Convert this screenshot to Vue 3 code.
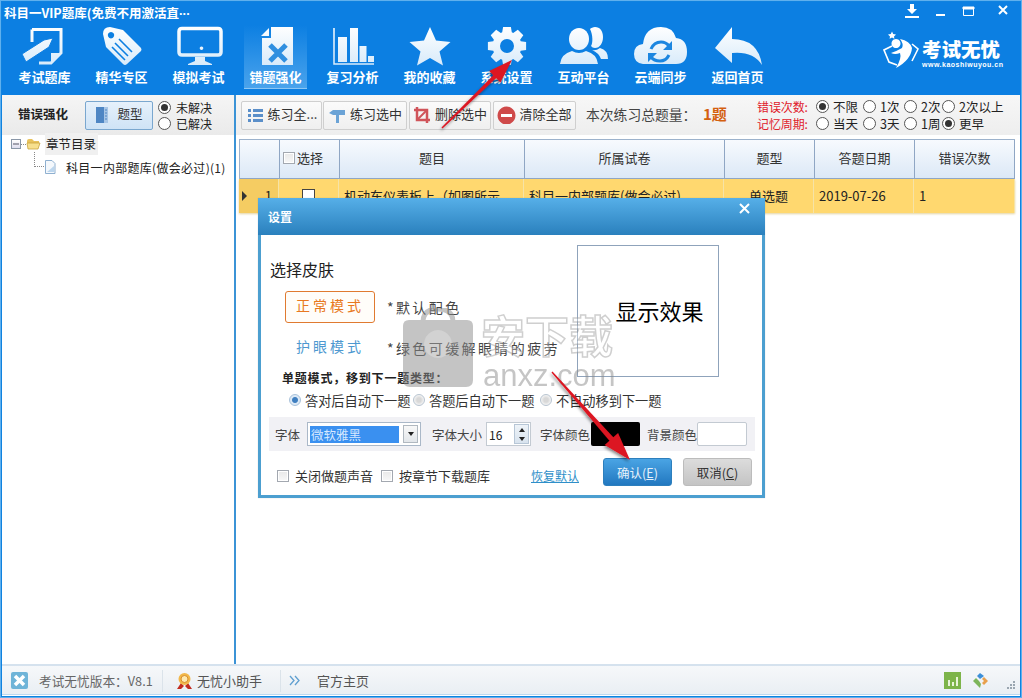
<script setup>
function gearPath() {
  const cx = 25, cy = 20, n = 8, ro = 19.5, ri = 14.5
  let d = ''
  for (let i = 0; i < n; i++) {
    const a = (i * 2 * Math.PI) / n - Math.PI / 2
    const w = 0.24, w2 = 0.2
    const pts = [
      [ri, a - w - 0.1],
      [ro, a - w2],
      [ro, a + w2],
      [ri, a + w + 0.1]
    ]
    pts.forEach((p, j) => {
      const x = (cx + p[0] * Math.cos(p[1])).toFixed(1)
      const y = (cy + p[0] * Math.sin(p[1])).toFixed(1)
      d += (i === 0 && j === 0 ? 'M' : 'L') + x + ' ' + y + ' '
    })
  }
  return d + 'Z M32 20 A7 7 0 1 0 18 20 A7 7 0 1 0 32 20 Z'
}

const W = 'url(#navfill)'
const B = '#0c7fe2'
const navItems = [
  { label: '考试题库', shapes: [
    { d: 'M12 3.5H41V27L31 37H19', fill: 'none', stroke: W, sw: 3 },
    { d: 'M12 3.5V16', fill: 'none', stroke: W, sw: 3 },
    { d: 'M41 27H31V37Z', fill: W },
    { d: 'M2 28L6 36L29 21L33 12L24 14Z', fill: W, stroke: B, sw: 1 }
  ] },
  { label: '精华专区', shapes: [
    { d: 'M6 8Q6 1 13 1L26 4L44 22Q45 24 44 25L30 38Q28 40 26 38L9 21Z', fill: W },
    { d: 'M14 6a3.2 3.2 0 1 0 .01 0Z', fill: B },
    { d: 'M22 13L35 26M18 17L31 30M15 21L28 34', fill: 'none', stroke: B, sw: 1.6 }
  ] },
  { label: '模拟考试', shapes: [
    { d: 'M8 2.5H44Q47 2.5 47 5.5V26Q47 29 44 29H8Q5 29 5 26V5.500Q5 2.500 8 2.500Z', fill: 'none', stroke: W, sw: 3.5 },
    { d: 'M27.500 24a1.800 1.800 0 1 0-.01 0Z', fill: W },
    { d: 'M21 31H31V35L38 38V39H14V38L21 35Z', fill: W }
  ] },
  { label: '错题强化', active: true, shapes: [
    { d: 'M20 1H42V39H11V12H20Z', fill: W },
    { d: 'M18 2V10H10Z', fill: W },
    { d: 'M19 19L35 35M35 19L19 35', fill: 'none', stroke: '#2f8fe0', sw: 5 }
  ] },
  { label: '复习分析', shapes: [
    { d: 'M6 2V38H46', fill: 'none', stroke: W, sw: 1.5 },
    { d: 'M10 11H19V36H10ZM22 2H30V36H22ZM31.500 20H38.500V36H31.500ZM40 30H46V36H40Z', fill: W }
  ] },
  { label: '我的收藏', shapes: [
    { d: 'M25 1L31 14.500L45.500 16L34.500 25.500L38 39.500L25 32L12 39.500L15.500 25.500L4.500 16L19 14.500Z', fill: W }
  ] },
  { label: '系统设置', shapes: [{ d: gearPath(), fill: W, rule: 'evenodd' }] },
  { label: '互动平台', shapes: [
    { d: 'M20 2C26 2 30 7 30 13S26 24 20 24S10 19 10 13S14 2 20 2Z', fill: W },
    { d: 'M1 38Q2 28 13 25Q20 29 27 25Q38 28 39 38Z', fill: W },
    { d: 'M36 1C41 1 44 5 44 11S41 22 36 22C34 22 33 21 32 20C34 17 34 9 31 3C32 2 34 1 36 1Z', fill: W },
    { d: 'M33 24Q37 25 41 22Q49 24 49 33H42Q40 27 33 24Z', fill: W }
  ] },
  { label: '云端同步', shapes: [
    { d: 'M7 38Q-2 37 -2 28Q-2 19 7 18Q9 1 25 1Q37 1 40 12Q51 13 51 26Q51 38 40 38Z', fill: W },
    { d: 'M15 23Q18 16 25 16Q30 16 33 20M33 29Q30 35 24 35Q18 35 15 31', fill: 'none', stroke: '#1c86e0', sw: 3 },
    { d: 'M36 15V24H27ZM12 36V27H21Z', fill: '#1c86e0' }
  ] },
  { label: '返回首页', shapes: [
    { d: 'M2 22L19 1V13Q45 13 49 39Q40 25 19 27V37Z', fill: W }
  ] }
]

const tools = [
  { label: '练习全...', w: 81, ml: 0, shapes: [
    { d: 'M2 3H5V6H2ZM2 8H5V11H2ZM2 13H5V16H2ZM7 3H17V6H7ZM7 8H17V11H7ZM7 13H17V16H7Z', fill: '#5b8fc9' }
  ] },
  { label: '练习选中', w: 84, ml: 1, shapes: [
    { d: 'M1 7L5 4H17V9H11V17H8V9H5Z', fill: '#6ba3d6' }
  ] },
  { label: '删除选中', w: 82, ml: 2, shapes: [
    { d: 'M4 1V14H17M1 4H14V17', fill: 'none', stroke: '#d0545a', sw: 2.5 },
    { d: 'M4 14L14 4', fill: 'none', stroke: '#d0545a', sw: 2 }
  ] },
  { label: '清除全部', w: 83, ml: 2, shapes: [
    { d: 'M9.500 .5a9 9 0 1 0 .01 0Z', fill: '#cf4a4a' },
    { d: 'M4 8H15V11H4Z', fill: '#fff' }
  ] }
]

const columns = [
  { label: '', w: 40 },
  { label: '选择', w: 60, check: true },
  { label: '题目', w: 185 },
  { label: '所属试卷', w: 200 },
  { label: '题型', w: 90 },
  { label: '答题日期', w: 100 },
  { label: '错误次数', w: 100 }
]

const errOptions = [
  { t: '不限', on: true, w: 47 }, { t: '1次', w: 41 }, { t: '2次', w: 38 }, { t: '2次以上' }
]
const memOptions = [
  { t: '当天', w: 47 }, { t: '3天', w: 41 }, { t: '1周', w: 38 }, { t: '更早', on: true }
]
</script>

<template>
  <div class="win">
    <svg class="defs" width="0" height="0" aria-hidden="true">
      <defs>
        <linearGradient id="navfill" gradientUnits="userSpaceOnUse" x1="0" y1="0" x2="0" y2="40">
          <stop offset="0" stop-color="#ffffff" />
          <stop offset="1" stop-color="#d7eafa" />
        </linearGradient>
      </defs>
    </svg>

    <header class="head">
      <div class="titlerow">
        <span class="title">科目一VIP题库(免费不用激活直<span class="more-dots">···</span></span>
        <div class="winbtns">
          <svg class="wb wb-dl" width="16" height="14" viewBox="0 0 16 14"><path d="M6 0H10V5H13L8 10L3 5H6ZM1 12H15V14H1Z" fill="#fff" /></svg>
          <svg class="wb wb-min" width="12" height="14" viewBox="0 0 12 14"><path d="M1 10H10V12H1Z" fill="#fff" /></svg>
          <svg class="wb wb-max" width="13" height="14" viewBox="0 0 13 14"><path d="M1.500 4.500H11.500V11.500H1.500Z M1 3H12V5H1Z" fill="none" stroke="#fff" /><path d="M1 3H12V5H1Z" fill="#fff" /></svg>
          <svg class="wb wb-x" width="12" height="14" viewBox="0 0 12 14"><path d="M2 2L10 10M10 2L2 10" stroke="#fff" stroke-width="2" fill="none" /></svg>
        </div>
      </div>
      <div class="navrow">
        <nav class="nav">
          <div v-for="n in navItems" :key="n.label" class="navitem" :class="{ active: n.active }">
            <svg class="navicon" width="50" height="40" viewBox="0 0 50 40">
              <path v-for="(s, i) in n.shapes" :key="i" :d="s.d" :fill="s.fill" :stroke="s.stroke" :stroke-width="s.sw" :fill-rule="s.rule" />
            </svg>
            <span class="navlabel">{{ n.label }}</span>
          </div>
        </nav>
        <div class="logo">
          <svg width="36" height="40" viewBox="0 0 36 40">
            <path d="M5 2L6.500 5L10 5.500L7.500 8L8 11L5 9.500L2 11L2.500 8L0 5.500L3.500 5Z" fill="#fff" transform="translate(5 0) scale(.8)" />
            <path d="M13 9a4.500 4.500 0 1 1-.01 0Z" fill="#fff" />
            <path d="M17 9Q27 11 29 18Q28 30 13 38Q19 28 17 23Q12 25 8 23Q14 21 19 18Q21 14 17 9Z" fill="#fff" />
            <path d="M9 16L1 20L6 32L14 35M29 14L35 19L29 31" fill="none" stroke="#fff" stroke-width="1.600" />
          </svg>
          <div class="logotext">
            <span class="logo-cn">考试无忧</span>
            <span class="logo-en">www.kaoshiwuyou.cn</span>
          </div>
        </div>
      </div>
    </header>

    <main class="body">
      <aside class="side">
        <div class="sidebar-top">
          <span class="side-title">错误强化</span>
          <button class="typebtn">
            <svg width="14" height="18" viewBox="0 0 14 18"><path d="M1 1H13V17H1Z" fill="#4e86c4" /><path d="M9 1H13V17H9Z" fill="#a8c6e6" /><path d="M10 4H12M10 7H12M10 10H12M10 13H12" stroke="#4e86c4" /></svg>
            <span class="lift">题型</span>
          </button>
          <div class="siderad">
            <label class="rad"><i class="dot on"></i>未解决</label>
            <label class="rad"><i class="dot"></i>已解决</label>
          </div>
        </div>
        <div class="tree">
          <div class="tree-root">
            <span class="minus"></span>
            <span class="tree-dash"></span>
            <svg width="15" height="12" viewBox="0 0 15 12"><path d="M1 3Q1 1 3 1H6L8 3H13V5H1Z" fill="#e8c25c" /><path d="M1 5H14L12 11H2Z" fill="#f7df8d" stroke="#c9a43f" stroke-width=".8" /></svg>
            <span class="tree-label">章节目录</span>
          </div>
          <div class="tree-leaf">
            <span class="elbow"></span>
            <svg width="12" height="14" viewBox="0 0 12 14"><path d="M1.500 .5H8L11 3.500V13.500H1.500Z" fill="#f4f8fc" stroke="#8fb0d0" /><path d="M3 12H10V6Z" fill="#bcd6ee" /></svg>
            <span class="leaf-label">科目一内部题库(做会必过)(1)</span>
          </div>
        </div>
      </aside>

      <section class="main">
        <div class="toolbar">
          <button v-for="t in tools" :key="t.label" class="tool" :style="{ width: t.w + 'px', marginLeft: t.ml + 'px' }">
            <svg width="19" height="18" viewBox="0 0 19 18">
              <path v-for="(s, i) in t.shapes" :key="i" :d="s.d" :fill="s.fill" :stroke="s.stroke" :stroke-width="s.sw" />
            </svg>
            <span class="lift">{{ t.label }}</span>
          </button>
          <span class="total">本次练习总题量：</span>
          <span class="total-n">1题</span>
          <div class="filters">
            <div class="filter">
              <span class="f-label">错误次数:</span>
              <label v-for="o in errOptions" :key="o.t" class="f-opt" :style="{ width: o.w ? o.w + 'px' : 'auto' }"><i class="dot" :class="{ on: o.on }"></i>{{ o.t }}</label>
            </div>
            <div class="filter">
              <span class="f-label">记忆周期:</span>
              <label v-for="o in memOptions" :key="o.t" class="f-opt" :style="{ width: o.w ? o.w + 'px' : 'auto' }"><i class="dot" :class="{ on: o.on }"></i>{{ o.t }}</label>
            </div>
          </div>
        </div>

        <div class="table">
          <div class="thead">
            <div v-for="c in columns" :key="c.w + c.label" class="th" :class="{ 'th-check': c.check }" :style="{ width: c.w + 'px' }">
              <i v-if="c.check" class="chk"></i>{{ c.label }}
            </div>
          </div>
          <div class="tr">
            <div class="td idx" style="width:40px"><span class="caret"></span><span>1</span></div>
            <div class="td ctr" style="width:60px"><i class="rowchk"></i></div>
            <div class="td" style="width:185px">机动车仪表板上（如图所示</div>
            <div class="td" style="width:200px">科目一内部题库(做会必过)</div>
            <div class="td ctr" style="width:90px">单选题</div>
            <div class="td" style="width:100px">2019-07-26</div>
            <div class="td" style="width:101px">1</div>
          </div>
        </div>
      </section>
    </main>

    <footer class="status">
      <svg class="st-logo" width="17" height="17" viewBox="0 0 17 17"><rect width="17" height="17" rx="2" fill="#6fb4d8" /><path d="M4 4L13 13M13 4L4 13" stroke="#fff" stroke-width="3.500" /></svg>
      <span class="st-ver">考试无忧版本：V8.1</span>
      <span class="st-sep st-sep1"></span>
      <svg class="st-medal" width="17" height="18" viewBox="0 0 17 18"><path d="M1 17L5 11L8 14L5 17ZM16 17L12 11L9 14L12 17Z" fill="#c22c20" /><circle cx="8.500" cy="7" r="6" fill="#f2b84a" /><circle cx="8.500" cy="7" r="3.500" fill="#fde9b0" stroke="#d98e2a" /></svg>
      <span class="st-help">无忧小助手</span>
      <span class="st-sep st-sep2"></span>
      <svg class="st-more" width="11" height="11" viewBox="0 0 11 11"><path d="M1 1L5 5.500L1 10M6 1L10 5.500L6 10" fill="none" stroke="#5f9fd0" stroke-width="1.300" /></svg>
      <span class="st-home">官方主页</span>
      <div class="st-right">
        <svg width="17" height="17" viewBox="0 0 17 17"><rect width="17" height="17" fill="#7db44a" /><path d="M4 8H6V14H4ZM8 10H10V14H8ZM12 5H14V14H12Z" fill="#e8f3d8" /></svg>
        <svg class="st-dia" width="17" height="17" viewBox="0 0 17 17"><path d="M8 1L12 4L8 7L5 4Z" fill="#3c8fd8" /><path d="M12 5L16 9L12 13L10 11L12 9L10 7Z" fill="#e8a04c" /><path d="M4 6L7 9L9 12L8 16L1 9Z" fill="#7cb55a" /></svg>
        <svg class="st-grip" width="9" height="9" viewBox="0 0 9 9"><path d="M7 1H9V3H7ZM4 4H6V6H4ZM7 4H9V6H7ZM1 7H3V9H1ZM4 7H6V9H4ZM7 7H9V9H7Z" fill="#9aa6b0" /></svg>
      </div>
    </footer>

    <div class="dialog">
      <div class="dlg-title">
        <span>设置</span>
        <svg width="11" height="11" viewBox="0 0 11 11"><path d="M1 1L10 10M10 1L1 10" stroke="#fff" stroke-width="2" /></svg>
      </div>
      <div class="dlg-body">
        <div class="dlg-top">
          <div class="dlg-left">
            <div class="skin-title">选择皮肤</div>
            <div class="mode-row first">
              <span class="mode mode-on">正常模式</span>
              <span class="mode-note">*默认配色</span>
            </div>
            <div class="mode-row second">
              <span class="mode mode-off">护眼模式</span>
              <span class="mode-note">*绿色可缓解眼睛的疲劳</span>
            </div>
            <div class="single">单题模式，移到下一题类型：</div>
          </div>
          <div class="preview">显示效果</div>
        </div>
        <div class="auto-row">
          <label class="arad a1"><i class="bdot on"></i>答对后自动下一题</label>
          <label class="arad a2"><i class="bdot"></i>答题后自动下一题</label>
          <label class="arad a3"><i class="bdot"></i>不自动移到下一题</label>
        </div>
        <div class="font-row">
          <span class="fl1">字体</span>
          <div class="select"><span class="sel-text">微软雅黑</span><span class="sel-btn"><i></i></span></div>
          <span class="fl2">字体大小</span>
          <div class="spin"><span>16</span><span class="spin-btns"><i class="up"></i><i class="down"></i></span></div>
          <span class="fl3">字体颜色</span>
          <span class="swatch black"></span>
          <span class="fl4">背景颜色</span>
          <span class="swatch white"></span>
        </div>
        <div class="dlg-foot">
          <label class="fchk c1"><i class="chk"></i>关闭做题声音</label>
          <label class="fchk c2"><i class="chk"></i>按章节下载题库</label>
          <a class="restore">恢复默认</a>
          <button class="btn ok">确认(<u>E</u>)</button>
          <button class="btn cancel">取消(<u>C</u>)</button>
        </div>
      </div>
    </div>

    <div class="watermark" aria-hidden="true">
      <svg class="wm-bag" width="70" height="80" viewBox="0 0 70 80">
        <path d="M20 14Q20 1 35 1Q50 1 50 14" fill="none" stroke="#8a8a8a" stroke-width="5" />
        <path d="M6 12H64Q70 12 70 18V72Q70 79 63 79H7Q0 79 0 72V18Q0 12 6 12Z" fill="#8a8a8a" />
        <path d="M35 22a14 14 0 1 1-.01 0Z" fill="#a6a6a6" />
      </svg>
      <span class="wm-cn">安下载</span>
      <span class="wm-en">anxz.com</span>
    </div>

    <svg class="arrows" width="1022" height="698" viewBox="0 0 1022 698" aria-hidden="true">
      <defs>
        <filter id="ashadow" x="-20%" y="-20%" width="140%" height="140%">
          <feDropShadow dx="-1" dy="2" stdDeviation="1.500" flood-color="#000" flood-opacity=".45" />
        </filter>
      </defs>
      <polygon filter="url(#ashadow)" fill="#dc1420" points="442.500,128.500 441.500,127.500 493.400,75.300 489.200,71 512,60 500.400,82.400 496.200,78.100" />
      <polygon filter="url(#ashadow)" fill="#dc1420" points="552.500,371.500 551.500,372.500 609.500,440.700 604.700,445 630,460 618.100,433 613.300,437.300" />
    </svg>
  </div>
</template>

<style scoped>
* { box-sizing: border-box; }
i { font-style: normal; }
button { font-family: inherit; padding: 0; }
.defs { position: absolute; }

.win {
  position: relative;
  width: 1022px;
  height: 698px;
  overflow: hidden;
  display: flex;
  flex-direction: column;
  background: #fff;
  border: 2px solid #1082df;
  outline: 1px solid #5fb0ee;
  outline-offset: -1px;
  font-family: "Noto Sans CJK SC", "Liberation Sans", sans-serif;
  font-size: 12px;
  color: #222;
}
.lift { margin-bottom: 3px; }

/* header */
.head { height: 93px; background: #0c7fe2; flex: none; color: #fff; }
.titlerow { height: 23px; display: flex; align-items: center; justify-content: space-between; padding-left: 2px; }
.title { font-size: 12.500px; font-weight: 700; line-height: 22px; }
.more-dots { font-family: "Liberation Sans", sans-serif; letter-spacing: -.5px; }
.winbtns { display: flex; align-items: center; height: 20px; margin-top: -6px; }
.wb { display: block; flex: none; }
.wb-dl { margin-right: 15px; }
.wb-min { margin-right: 15px; }
.wb-max { margin-right: 22px; }
.wb-x { margin-right: 11px; }
.navrow { display: flex; height: 70px; }
.nav { display: flex; padding-left: 4px; }
.navitem {
  width: 77px;
  display: flex;
  flex-direction: column;
  align-items: center;
  position: relative;
}
.navicon { display: block; margin-top: 1px; overflow: visible; flex: none; }
.navlabel { font-size: 13px; font-weight: 700; line-height: 18px; margin-top: 2px; white-space: nowrap; }
.navitem.active::before {
  content: "";
  position: absolute;
  left: 7px;
  right: 7px;
  top: 0;
  height: 63px;
  background: linear-gradient(#0c7fe2, #4aa3ec);
  border-bottom: 1px solid #8cc6f4;
}
.navitem.active > * { position: relative; }
.logo { margin-left: auto; margin-right: 17px; display: flex; align-items: flex-start; padding-top: 5px; }
.logotext { display: flex; flex-direction: column; margin-left: 3px; padding-top: 7px; width: 81px; }
.logo-cn { font-size: 19.500px; font-weight: 900; line-height: 24px; white-space: nowrap; }
.logo-en { font-family: "Liberation Sans", sans-serif; font-size: 7px; font-weight: 700; line-height: 8px; letter-spacing: .5px; white-space: nowrap; }

/* body */
.body { flex: 1; display: flex; min-height: 0; }
.side { width: 234px; flex: none; border-right: 2px solid #3b93d6; }
.sidebar-top {
  height: 40px;
  display: flex;
  align-items: center;
  background: linear-gradient(#f5f5f5, #eaeaea);
  padding-left: 16px;
}
.side-title { font-size: 12.500px; font-weight: 700; width: 67px; margin-bottom: 3px; }
.typebtn {
  width: 68px;
  height: 29px;
  display: flex;
  align-items: center;
  justify-content: center;
  gap: 8px;
  background: linear-gradient(#e6f1fb, #cfe3f6);
  border: 1px solid #7aa7cf;
  border-radius: 2px;
  font-size: 12.500px;
  color: #333;
}
.siderad { display: flex; flex-direction: column; margin-left: 5px; }
.rad { display: flex; align-items: center; height: 16px; font-size: 12px; white-space: nowrap; }
.dot {
  width: 13px;
  height: 13px;
  border-radius: 50%;
  border: 1px solid #555;
  background: #fff;
  flex: none;
  margin-right: 5px;
  position: relative;
}
.dot.on::after {
  content: "";
  position: absolute;
  inset: 2px;
  border-radius: 50%;
  background: #333;
}

.tree { padding-top: 0; }
.tree-root { display: flex; align-items: center; height: 22px; padding-left: 9px; margin-top: -2px; }
.minus { width: 10px; height: 10px; border: 1px solid #8a97a8; background: linear-gradient(#fff, #dde); position: relative; flex: none; }
.minus::after { content: ""; position: absolute; left: 1px; right: 1px; top: 3px; height: 2px; background: #556; transform: scaleY(.5); }
.tree-dash { width: 5px; border-top: 1px dotted #888; flex: none; }
.tree-label { background: #f0f0f0; height: 22px; line-height: 22px; padding: 0 2px 0 1px; margin-left: 4px; font-size: 12.500px; }
.tree-leaf { display: flex; align-items: center; height: 22px; padding-left: 32px; margin-top: 1px; }
.elbow { width: 10px; height: 15px; border-left: 1px dotted #888; border-bottom: 1px dotted #888; margin-top: -15px; flex: none; }
.leaf-label { margin-left: 10px; font-size: 12px; white-space: nowrap; letter-spacing: .3px; }

.main { flex: 1; min-width: 0; }
.toolbar {
  height: 40px;
  display: flex;
  align-items: center;
  padding-left: 5px;
  background: linear-gradient(#f7f7f7, #eeeeee);
  position: relative;
}
.tool {
  height: 29px;
  display: flex;
  align-items: center;
  justify-content: center;
  gap: 3px;
  background: linear-gradient(#fbfbfb, #efefef);
  border: 1px solid #cfcfcf;
  border-radius: 2px;
  font-size: 13px;
  color: #333;
  white-space: nowrap;
  flex: none;
}
.total { margin: 0 0 3px 10px; font-size: 13.800px; color: #444; white-space: nowrap; width: 117px; }
.total-n { color: #d4600f; font-size: 15px; font-weight: 700; white-space: nowrap; margin-bottom: 3px; }
.filters { position: absolute; left: 521px; top: 3px; }
.filter { display: flex; align-items: center; height: 17px; white-space: nowrap; }
.f-label { color: #e0202c; font-size: 12px; width: 59px; letter-spacing: -.1px; }
.f-opt { display: flex; align-items: center; font-size: 12.500px; }
.f-opt .dot { margin-right: 4px; }

.table { margin: 4px 0 0 3px; width: 776px; }
.thead { display: flex; height: 40px; border-top: 1px solid #9cb2cc; border-left: 1px solid #9cb2cc; background: linear-gradient(#f7fafe, #dbe8f6); }
.th {
  display: flex;
  align-items: center;
  justify-content: center;
  border-right: 1px solid #8fa6c4;
  border-bottom: 1px solid #8fa6c4;
  font-size: 13px;
  color: #333;
  flex: none;
  padding-bottom: 3px;
}
.th-check { justify-content: flex-start; padding-left: 3px; }
.th:first-child { width: 40px; }
.chk {
  width: 12px;
  height: 12px;
  border: 1px solid #a3a8b0;
  background: linear-gradient(#e8e8e8, #f8f8f8);
  box-shadow: inset 0 0 0 1px #fff;
  flex: none;
  margin-right: 2px;
}
.tr { display: flex; height: 34px; background: #ffd86f; box-shadow: 0 1px 2px #e3d3a0; overflow: hidden; }
.td {
  flex: none;
  display: flex;
  align-items: center;
  padding-left: 5px;
  padding-bottom: 2px;
  font-size: 13px;
  color: #222;
  white-space: nowrap;
  overflow: hidden;
  border-right: 1px solid #f6e3a6;
}
.td.ctr { justify-content: center; padding-left: 0; }
.idx { justify-content: flex-end; padding-right: 6px; background: #f5cc62; position: relative; }
.caret { position: absolute; left: 3px; top: 12px; border-left: 5px solid #333; border-top: 5px solid transparent; border-bottom: 5px solid transparent; }
.rowchk { width: 13px; height: 13px; border: 1px solid #444; background: #fff; }

/* status */
.status {
  height: 32px;
  margin-top: auto;
  flex: none;
  display: flex;
  align-items: center;
  background: linear-gradient(#f6f8fa, #e9eef3);
  border-top: 2px solid #d5e2ee;
  border-bottom: 1px solid #fff;
  box-shadow: inset 0 -1px 0 #bcd9f0;
  color: #666;
  font-size: 12.700px;
  position: relative;
  padding-left: 9px;
}
.st-logo { flex: none; }
.st-ver { margin-left: 11px; width: 123px; white-space: nowrap; }
.st-sep { width: 1px; height: 22px; background: #dbe3ea; flex: none; }
.st-medal { margin-left: 13px; flex: none; }
.st-help { margin-left: 4px; width: 83px; color: #555; font-size: 13px; }
.st-more { margin-left: 8px; margin-right: 17px; flex: none; }
.st-home { color: #555; font-size: 13px; }
.st-right { margin-left: auto; display: flex; align-items: center; padding-right: 5px; }
.st-dia { margin-left: 11px; }
.st-grip { margin-left: 17px; margin-top: 8px; }

/* dialog */
.dialog {
  position: absolute;
  left: 256px;
  top: 196px;
  width: 507px;
  height: 300px;
  display: flex;
  flex-direction: column;
  background: #fff;
  border: 3px solid #4c9fd0;
  border-top: 0;
  box-shadow: 0 0 1px rgba(0,0,0,.2);
}
.dlg-title {
  height: 37px;
  margin: 0 -3px;
  flex: none;
  background: linear-gradient(#56afe8, #2a80bd);
  color: #fff;
  font-size: 12px;
  font-weight: 700;
  display: flex;
  align-items: center;
  justify-content: space-between;
  padding: 0 15px 0 10px;
}
.dlg-title svg { margin-top: -17px; }
.dlg-body { flex: 1; min-height: 0; display: flex; flex-direction: column; }
.dlg-top { display: flex; height: 157px; }
.dlg-left { width: 316px; padding-left: 9px; flex: none; }
.skin-title { margin-top: 24px; font-size: 16px; line-height: 20px; color: #222; }
.mode-row { display: flex; align-items: center; height: 32px; }
.mode-row.first { margin-top: 12px; }
.mode-row.second { margin-top: 9px; }
.mode {
  width: 90px;
  height: 32px;
  margin-left: 15px;
  display: flex;
  align-items: center;
  justify-content: center;
  font-size: 14px;
  letter-spacing: 3px;
  flex: none;
  padding-bottom: 5px;
}
.mode-on { border: 1px solid #e07a30; border-radius: 3px; color: #e87820; background: #fffdf9; }
.mode-off { color: #4d98d0; }
.mode-note { margin-left: 12px; font-size: 14px; letter-spacing: 2.400px; color: #444; white-space: nowrap; }
.single { margin: 6px 0 0 12px; font-size: 12px; font-weight: 700; line-height: 16px; color: #222; white-space: nowrap; letter-spacing: .8px; }
.preview {
  margin-top: 10px;
  width: 142px;
  height: 132px;
  flex: none;
  border: 1px solid #8fa3bb;
  display: flex;
  align-items: center;
  justify-content: center;
  font-size: 22px;
  color: #000;
  padding: 0 0 3px 23px;
}
.auto-row { display: flex; height: 16px; margin-top: 0; align-items: center; padding-left: 28px; font-size: 13.200px; color: #333; }
.arad { display: flex; align-items: center; white-space: nowrap; }
.a1 { width: 124px; }
.a2 { width: 127px; }
.bdot {
  width: 12px;
  height: 12px;
  border-radius: 50%;
  border: 1px solid #b8c4d0;
  background: radial-gradient(#d8d8d8 30%, #f4f4f4 70%);
  flex: none;
  margin-right: 4px;
}
.bdot.on { background: radial-gradient(#3f7fc0 35%, #dce9f6 50%); border-color: #a9c2da; }
.font-row {
  margin: 9px 7px 0 8px;
  height: 34px;
  flex: none;
  display: flex;
  align-items: center;
  background: #f1f1f5;
  font-size: 12.500px;
  color: #444;
  white-space: nowrap;
}
.fl1 { margin-left: 6px; width: 32px; }
.select {
  width: 114px;
  height: 24px;
  display: flex;
  align-items: center;
  background: #fff;
  border: 1px solid #aab8c8;
  padding: 0 2px;
  flex: none;
}
.sel-text { width: 91px; height: 17px; line-height: 17px; background: #3a90f0; color: #d6e8ff; font-size: 12.500px; padding-left: 1px; }
.sel-btn { margin-left: 4px; width: 15px; height: 18px; background: linear-gradient(#f8f8f8, #e2e6ea); border: 1px solid #b0b8c0; display: flex; align-items: center; justify-content: center; }
.sel-btn i { border-top: 4px solid #222; border-left: 3px solid transparent; border-right: 3px solid transparent; }
.fl2 { margin-left: 11px; width: 54px; }
.spin {
  width: 45px;
  height: 24px;
  display: flex;
  align-items: center;
  justify-content: space-between;
  background: #fff;
  border: 1px solid #c3cad2;
  padding: 0 1px 0 2px;
  font-size: 12px;
  color: #222;
  flex: none;
}
.spin-btns { width: 15px; height: 20px; display: flex; flex-direction: column; justify-content: space-around; align-items: center; background: linear-gradient(#eef3f8, #d8e3ee); border: 1px solid #b7c6d6; }
.up { border-bottom: 4px solid #222; border-left: 3px solid transparent; border-right: 3px solid transparent; }
.down { border-top: 4px solid #222; border-left: 3px solid transparent; border-right: 3px solid transparent; }
.fl3 { margin-left: 9px; width: 51px; }
.swatch { height: 24px; width: 49px; flex: none; border-radius: 2px; }
.swatch.black { background: #000; }
.fl4 { margin-left: 7px; width: 50px; }
.swatch.white { background: #fff; border: 1px solid #c3cad2; width: 50px; }
.dlg-foot { position: relative; flex: 1; display: flex; align-items: center; font-size: 13px; color: #333; }
.fchk { display: flex; align-items: center; white-space: nowrap; margin-top: 5px; }
.fchk .chk { margin-right: 6px; }
.c1 { margin-left: 16px; width: 104px; }
.c2 { width: 150px; }
.restore { color: #2f8fc9; text-decoration: underline; font-size: 12px; margin-top: 5px; width: 72px; white-space: nowrap; }
.btn {
  width: 69px;
  height: 28px;
  border-radius: 3px;
  font-size: 12.500px;
  display: flex;
  align-items: center;
  justify-content: center;
  flex: none;
  margin-top: -2px;
}
.ok { background: linear-gradient(#4aa4e4, #2278c0); border: 1px solid #2d7fbd; color: #e4f1fb; }
.cancel { margin-left: 11px; background: linear-gradient(#dcdcdc, #c4c4c4); border: 1px solid #bcbcbc; color: #333; }

/* watermark */
.watermark { position: absolute; left: 401px; top: 306px; width: 215px; height: 84px; pointer-events: none; opacity: .5; }
.wm-bag { position: absolute; left: 0; top: 0; }
.wm-cn {
  position: absolute;
  left: 78px;
  top: -6px;
  font-size: 44px;
  font-weight: 700;
  line-height: 64px;
  color: rgba(255,255,255,.6);
  -webkit-text-stroke: 1.500px #a0a0a0;
  white-space: nowrap;
}
.wm-en {
  position: absolute;
  left: 80px;
  top: 50px;
  font-family: "Liberation Sans", sans-serif;
  font-size: 31px;
  line-height: 36px;
  color: #8c8c8c;
  white-space: nowrap;
}

.arrows { position: absolute; left: -2px; top: -2px; pointer-events: none; }
</style>
